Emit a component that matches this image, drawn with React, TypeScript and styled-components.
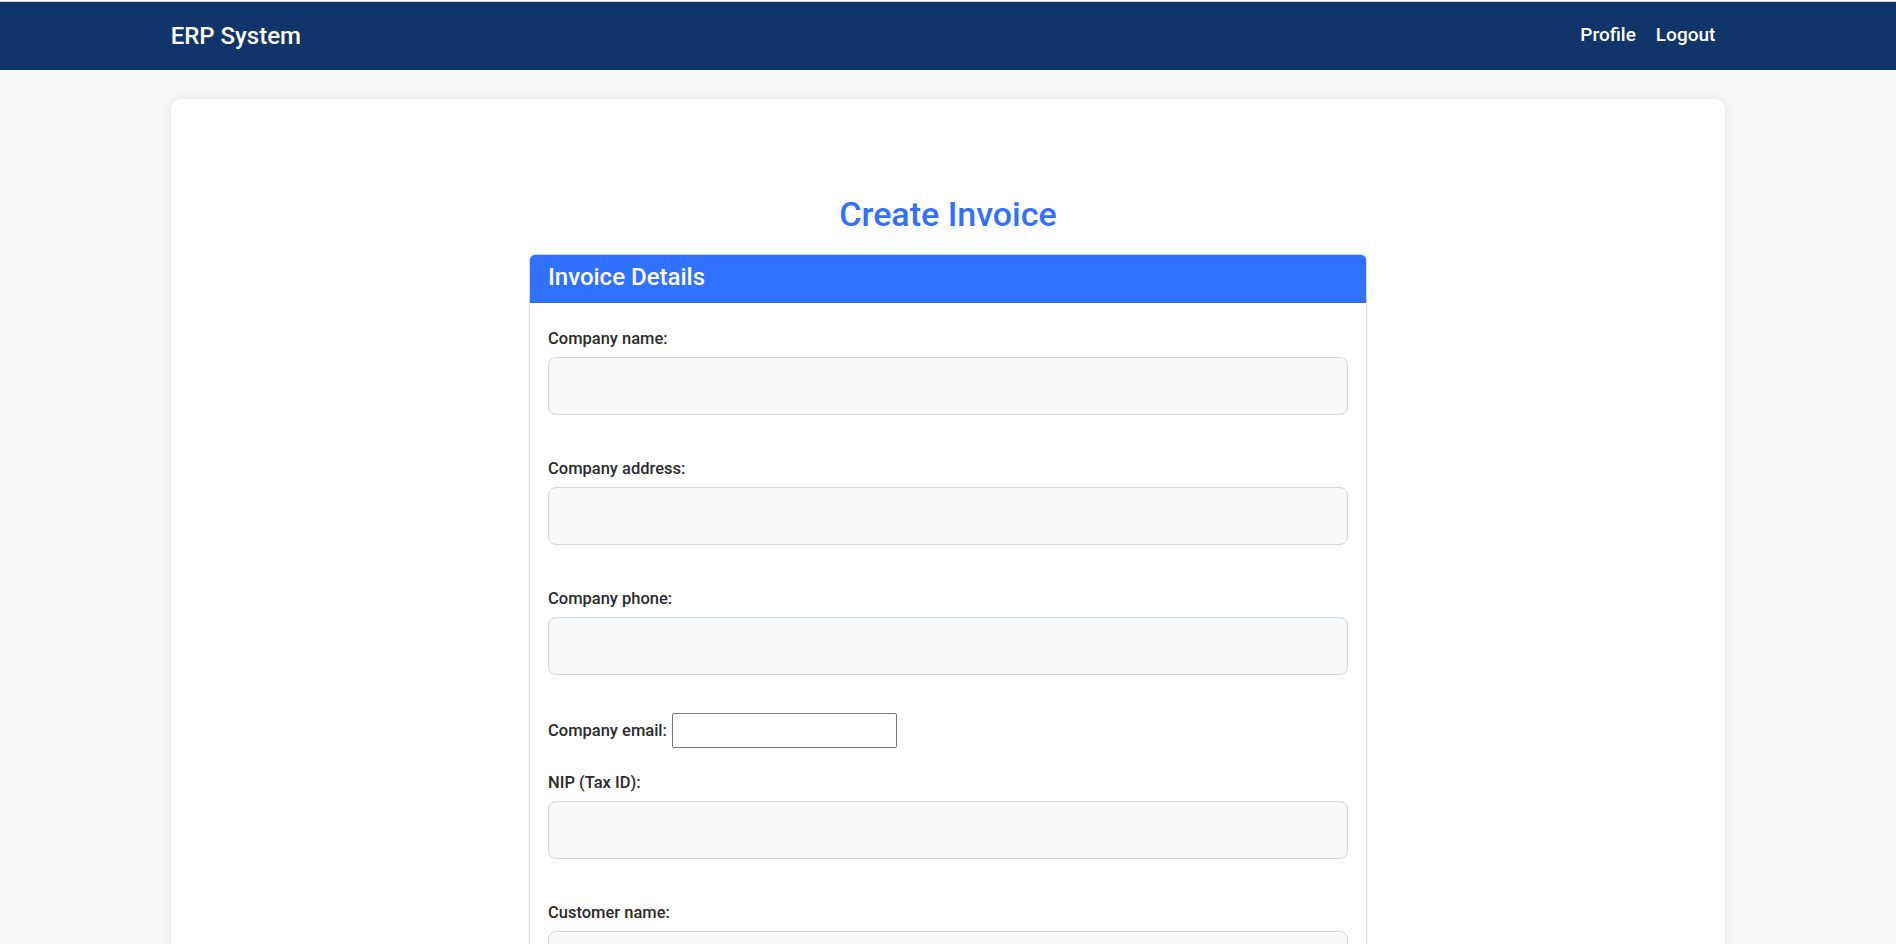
import React from "react";
import styled, { createGlobalStyle } from "styled-components";

const GlobalStyle = createGlobalStyle`
  html, body {
    margin: 0;
    padding: 0;
    background: #f6f7f9;
    font-family: Roboto, "Noto Sans", "Liberation Sans", sans-serif;
    color: #2b2b2b;
  }
  * { box-sizing: border-box; }
`;

const TopEdge = styled.div`
  height: 2px;
  border-top: 1px solid #ffffff;
  background: #d9dbdf;
`;

const NavBar = styled.header`
  height: 68px;
  background: #11346a;
  display: flex;
  align-items: center;
`;

const Container = styled.div`
  width: 82%;
  margin: 0 auto;
`;

const NavInner = styled(Container)`
  display: flex;
  align-items: center;
  justify-content: space-between;
`;

const Brand = styled.span`
  color: #ffffff;
  font-size: 24px;
  font-weight: 500;
  margin-top: -1px;
`;

const NavLinks = styled.nav`
  display: flex;
  align-items: center;
  margin-top: -3px;
`;

const NavLink = styled.a`
  color: #ffffff;
  font-size: 19px;
  font-weight: 500;
  padding: 0 10px;
  text-decoration: none;
  cursor: pointer;
`;

const Main = styled(Container)`
  margin-top: 29px;
  background: #ffffff;
  border-radius: 10px;
  box-shadow: 0 0 12px rgba(0, 0, 0, 0.07);
  padding: 95px 0 40px;
  display: flex;
  flex-direction: column;
  align-items: center;
  min-height: 1200px;
`;

const Title = styled.h1`
  margin: 0 0 20px;
  font-size: 34px;
  font-weight: 500;
  color: #3171ff;
  line-height: 40px;
`;

const Panel = styled.section`
  width: 838px;
  border: 1px solid #d3d5d9;
  border-radius: 6px;
  overflow: hidden;
  box-shadow: 0 0 4px rgba(0, 0, 0, 0.04);
`;

const PanelHeader = styled.div`
  background: #3171ff;
  border-bottom: 1px solid #2a62de;
  color: #ffffff;
  font-size: 24px;
  font-weight: 500;
  line-height: 28px;
  padding: 8px 18px 11px;
`;

const PanelBody = styled.div`
  padding: 20px 18px 20px;
`;

const Field = styled.div`
  display: flex;
  flex-direction: column;
  margin-bottom: 38px;
`;

const Label = styled.label`
  font-size: 16.5px;
  font-weight: 500;
  line-height: 19px;
  color: #2b2b2b;
  margin: 6px 0 9px;
`;

const TextInput = styled.input`
  height: 58px;
  width: 100%;
  border: 1px solid #d3d6db;
  border-radius: 8px;
  background: #f7f8fa;
  font-size: 16px;
  padding: 0 14px;
  outline: none;
`;

const InlineField = styled.div`
  display: flex;
  align-items: center;
  gap: 5px;
  margin-bottom: 19px;
`;

const InlineLabel = styled.label`
  font-size: 16.5px;
  font-weight: 500;
  line-height: 19px;
  color: #2b2b2b;
`;

const PlainInput = styled.input`
  width: 225px;
  height: 35px;
  border: 1px solid #767676;
  border-radius: 2px;
  background: #ffffff;
  font-size: 16px;
  padding: 0 6px;
`;

const fieldsBefore = ["Company name:", "Company address:", "Company phone:"];
const fieldsAfter = ["NIP (Tax ID):", "Customer name:", "Customer address:"];

export default function App() {
  return (
    <>
      <GlobalStyle />
      <TopEdge />
      <NavBar>
        <NavInner>
          <Brand>ERP System</Brand>
          <NavLinks>
            <NavLink>Profile</NavLink>
            <NavLink>Logout</NavLink>
          </NavLinks>
        </NavInner>
      </NavBar>
      <Main as="main">
        <Title>Create Invoice</Title>
        <Panel>
          <PanelHeader>Invoice Details</PanelHeader>
          <PanelBody>
            {fieldsBefore.map((f) => (
              <Field key={f}>
                <Label>{f}</Label>
                <TextInput type="text" />
              </Field>
            ))}
            <InlineField>
              <InlineLabel>Company email:</InlineLabel>
              <PlainInput type="email" />
            </InlineField>
            {fieldsAfter.map((f) => (
              <Field key={f}>
                <Label>{f}</Label>
                <TextInput type="text" />
              </Field>
            ))}
          </PanelBody>
        </Panel>
      </Main>
    </>
  );
}
